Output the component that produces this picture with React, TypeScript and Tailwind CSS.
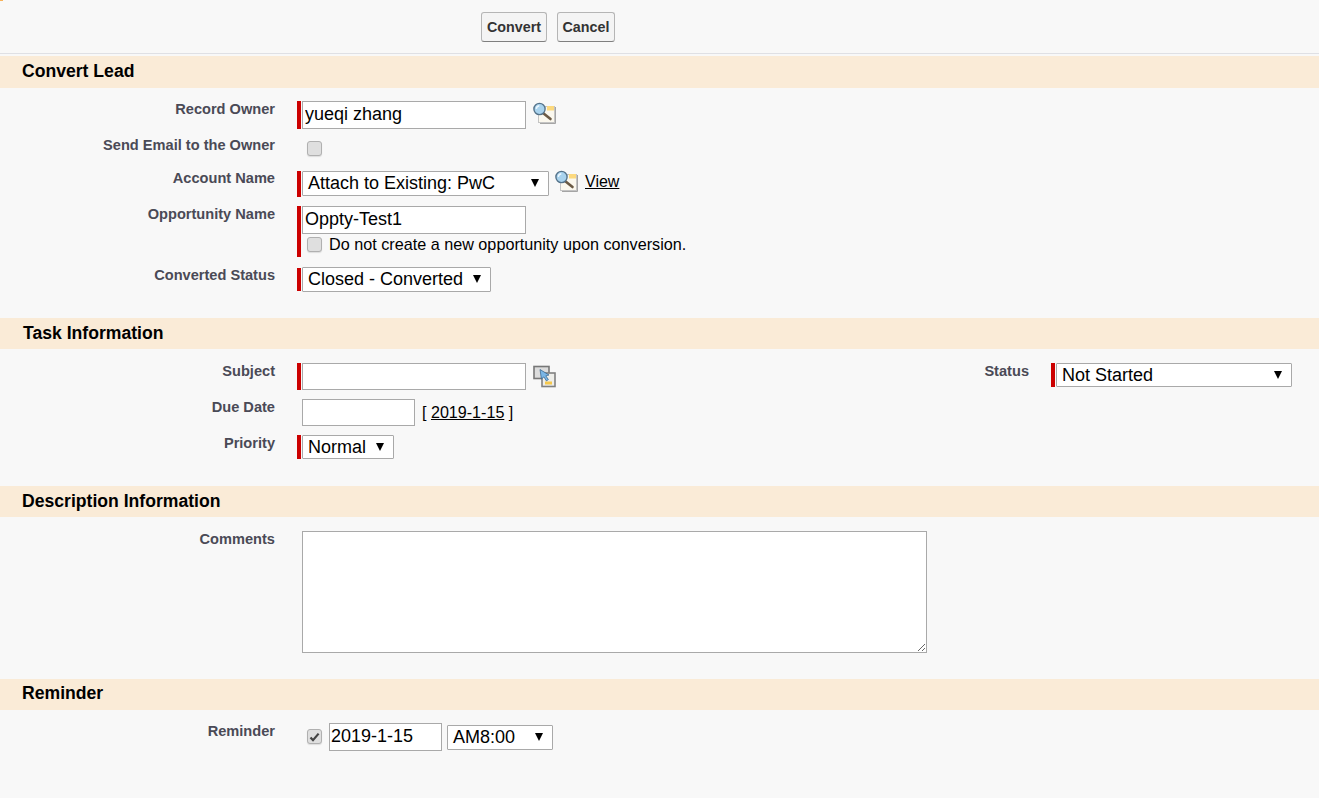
import type { ReactNode } from "react"

const font = "font-['Liberation_Sans',Arial,sans-serif]"

function Section({ title, className, children }: { title: string; className: string; children: ReactNode }) {
  return (
    <section>
      <h2 className={`bg-[#faebd7] pl-[22px] text-[17.6px] font-bold text-black ${className}`}>{title}</h2>
      {children}
    </section>
  )
}

function Label({ children }: { children: ReactNode }) {
  return <div className="w-[275px] shrink-0 text-right text-[14.6px] leading-4 font-bold text-[#4a4a56]">{children}</div>
}

function Required({ className = "" }: { className?: string }) {
  return <span className={`mr-px w-1 shrink-0 bg-[#c00] ${className}`} />
}

function TextBox({ value = "", className }: { value?: string; className: string }) {
  return (
    <input
      readOnly
      value={value}
      className={`border border-[#a9a9a9] bg-white pr-[2px] pl-[2px] pb-[2px] text-[18px] text-black outline-none ${className}`}
    />
  )
}

function Select({ value, className }: { value: string; className: string }) {
  return (
    <div className={`flex items-center justify-between rounded-[1px] border border-[#a9a9a9] bg-white pr-[9px] pl-[5px] pb-px text-[18px] leading-5 text-black ${className}`}>
      <span>{value}</span>
      <span className="h-0 w-0 border-x-[4px] border-t-[8px] border-x-transparent border-t-black" />
    </div>
  )
}

function Check({ checked = false, className = "" }: { checked?: boolean; className?: string }) {
  return (
    <span className={`flex h-[15px] w-[15px] shrink-0 items-center justify-center rounded-[3px] border border-[#b0b0b0] bg-[#dfdfdf] shadow-[0_1px_1px_#ddd] ${className}`}>
      {checked && (
        <svg width="11" height="10" viewBox="0 0 11 10">
          <path d="M1.5 5.5 4 8.2 9.6 1.6" fill="none" stroke="#444" strokeWidth="2.2" />
        </svg>
      )}
    </span>
  )
}

function LookupIcon({ className = "" }: { className?: string }) {
  return (
    <svg width="24" height="22" viewBox="0 0 24 22" className={className}>
      <rect x="5.5" y="4.5" width="16" height="16" fill="#fbf8ee" stroke="#c4c4c4" />
      <rect x="14" y="4" width="7" height="4.5" fill="#fcd97e" />
      <path d="M22.5 5v16.5H7" fill="none" stroke="#a5a5a5" />
      <path d="M10 11l7.5 6" stroke="#6b5a44" strokeWidth="2.6" strokeLinecap="round" />
      <circle cx="6.5" cy="7" r="5.6" fill="#a9d3ee" stroke="#55738a" strokeWidth="1.4" />
      <path d="M3.3 6.8a3.5 3.5 0 0 1 3-3" fill="none" stroke="#eef8ff" strokeWidth="1.4" />
    </svg>
  )
}

function ComboIcon({ className = "" }: { className?: string }) {
  return (
    <svg width="24" height="23" viewBox="0 0 24 23" className={className}>
      <rect x="1" y="1.5" width="15" height="12" fill="#dcdcdc" stroke="#777" strokeWidth="1.6" />
      <rect x="9" y="8" width="13" height="13.5" fill="#eeeeea" stroke="#808080" strokeWidth="1.6" />
      <path d="M12 16.5h7v3h-7z" fill="#f6c84c" />
      <path d="M7 4.5l9 5.5-3.2.8 2.6 3.8-2 1.3-2.5-4L8.4 14z" fill="#7ab6e6" stroke="#2f5f8a" strokeWidth=".7" />
    </svg>
  )
}

export default function App() {
  return (
    <div className={`${font} relative h-[798px] overflow-hidden bg-[#f8f8f8]`}>
      <span className="absolute top-0 left-0 h-px w-[3px] bg-[#f7b25a]" />
      <div className="flex h-[54px] gap-[10px] border-b border-[#dfe0e4] pt-3 pl-[481px]">
        <button className="h-[30px] w-[66px] rounded-[3px] border border-[#b5b5b5] border-b-[#7f7f7f] bg-[#f4f4f4] pt-[2px] text-[14.3px] font-bold text-[#333]">Convert</button>
        <button className="h-[30px] w-[58px] rounded-[3px] border border-[#b5b5b5] border-b-[#7f7f7f] bg-[#f4f4f4] pt-[2px] text-[14.3px] font-bold text-[#333]">Cancel</button>
      </div>

      <div className="pt-[2px]">
        <Section title="Convert Lead" className="h-[32px] leading-[30px]">
          <div className="flex flex-col pt-[13px]">
            <div className="flex h-[28px]">
              <Label>Record Owner</Label>
              <div className="ml-[22px] flex">
                <Required />
                <TextBox value="yueqi zhang" className="h-[28px] w-[224px]" />
                <LookupIcon className="mt-[1px] ml-[7px]" />
              </div>
            </div>
            <div className="mt-[8px] flex h-[20px]">
              <Label>Send Email to the Owner</Label>
              <Check className="mt-[4px] ml-[32px]" />
            </div>
            <div className="mt-[13px] flex h-[27px]">
              <Label>Account Name</Label>
              <div className="ml-[22px] flex">
                <Required className="mt-px h-[26px]" />
                <Select value="Attach to Existing: PwC" className="mt-px h-[25px] w-[247px]" />
                <LookupIcon className="ml-[6px]" />
                <a className="mt-[3px] ml-[6px] text-[16px] leading-[18px] text-black underline">View</a>
              </div>
            </div>
            <div className="mt-[9px] flex">
              <Label>Opportunity Name</Label>
              <div className="ml-[22px] flex">
                <Required className="h-[51px]" />
                <div>
                  <TextBox value="Oppty-Test1" className="block h-[28px] w-[224px]" />
                  <div className="mt-[2px] flex items-center gap-[7px] pl-[5px] text-[16.2px] leading-[18px] text-black">
                    <Check />
                    <span className="-mt-px">Do not create a new opportunity upon conversion.</span>
                  </div>
                </div>
              </div>
            </div>
            <div className="mt-[10px] mb-[26px] flex h-[25px]">
              <Label>Converted Status</Label>
              <div className="ml-[22px] flex">
                <Required className="mt-px h-[23px]" />
                <Select value="Closed - Converted" className="h-[25px] w-[189px]" />
              </div>
            </div>
          </div>
        </Section>

        <Section title="Task Information" className="h-[31px] pl-[23px] leading-[30px]">
          <div className="flex pt-[14px]">
            <div className="flex flex-col">
              <div className="flex h-[27px]">
                <Label>Subject</Label>
                <div className="ml-[22px] flex">
                  <Required />
                  <TextBox className="h-[27px] w-[224px]" />
                  <ComboIcon className="mt-[2px] ml-[7px]" />
                </div>
              </div>
              <div className="mt-[9px] flex h-[27px]">
                <Label>Due Date</Label>
                <TextBox className="ml-[27px] h-[27px] w-[113px]" />
                <span className="mt-[4px] ml-[7px] text-[16.1px] leading-[18px] text-black">
                  [ <a className="underline">2019-1-15</a> ]
                </span>
              </div>
              <div className="mt-[9px] mb-[27px] flex h-[24px]">
                <Label>Priority</Label>
                <div className="ml-[22px] flex">
                  <Required />
                  <Select value="Normal" className="h-[24px] w-[92px]" />
                </div>
              </div>
            </div>
            <div className="ml-[427px] flex h-[24px]">
              <div className="w-[45px] text-right text-[14.6px] leading-4 font-bold text-[#4a4a56]">Status</div>
              <div className="ml-[22px] flex">
                <Required />
                <Select value="Not Started" className="h-[24px] w-[236px]" />
              </div>
            </div>
          </div>
        </Section>

        <Section title="Description Information" className="h-[31px] leading-[30px]">
          <div className="flex pt-[14px] pb-[26px]">
            <Label>Comments</Label>
            <textarea readOnly className="ml-[27px] block h-[122px] w-[625px] border border-[#a9a9a9] bg-white outline-none" />
          </div>
        </Section>

        <Section title="Reminder" className="h-[31px] leading-[29px]">
          <div className="flex pt-[13px]">
            <Label>Reminder</Label>
            <Check checked className="mt-[6px] ml-[32px]" />
            <TextBox value="2019-1-15" className="ml-[7px] h-[28px] w-[113px] pl-px" />
            <Select value="AM8:00" className="mt-[2px] ml-[5px] h-[25px] w-[106px]" />
          </div>
        </Section>
      </div>
    </div>
  )
}
